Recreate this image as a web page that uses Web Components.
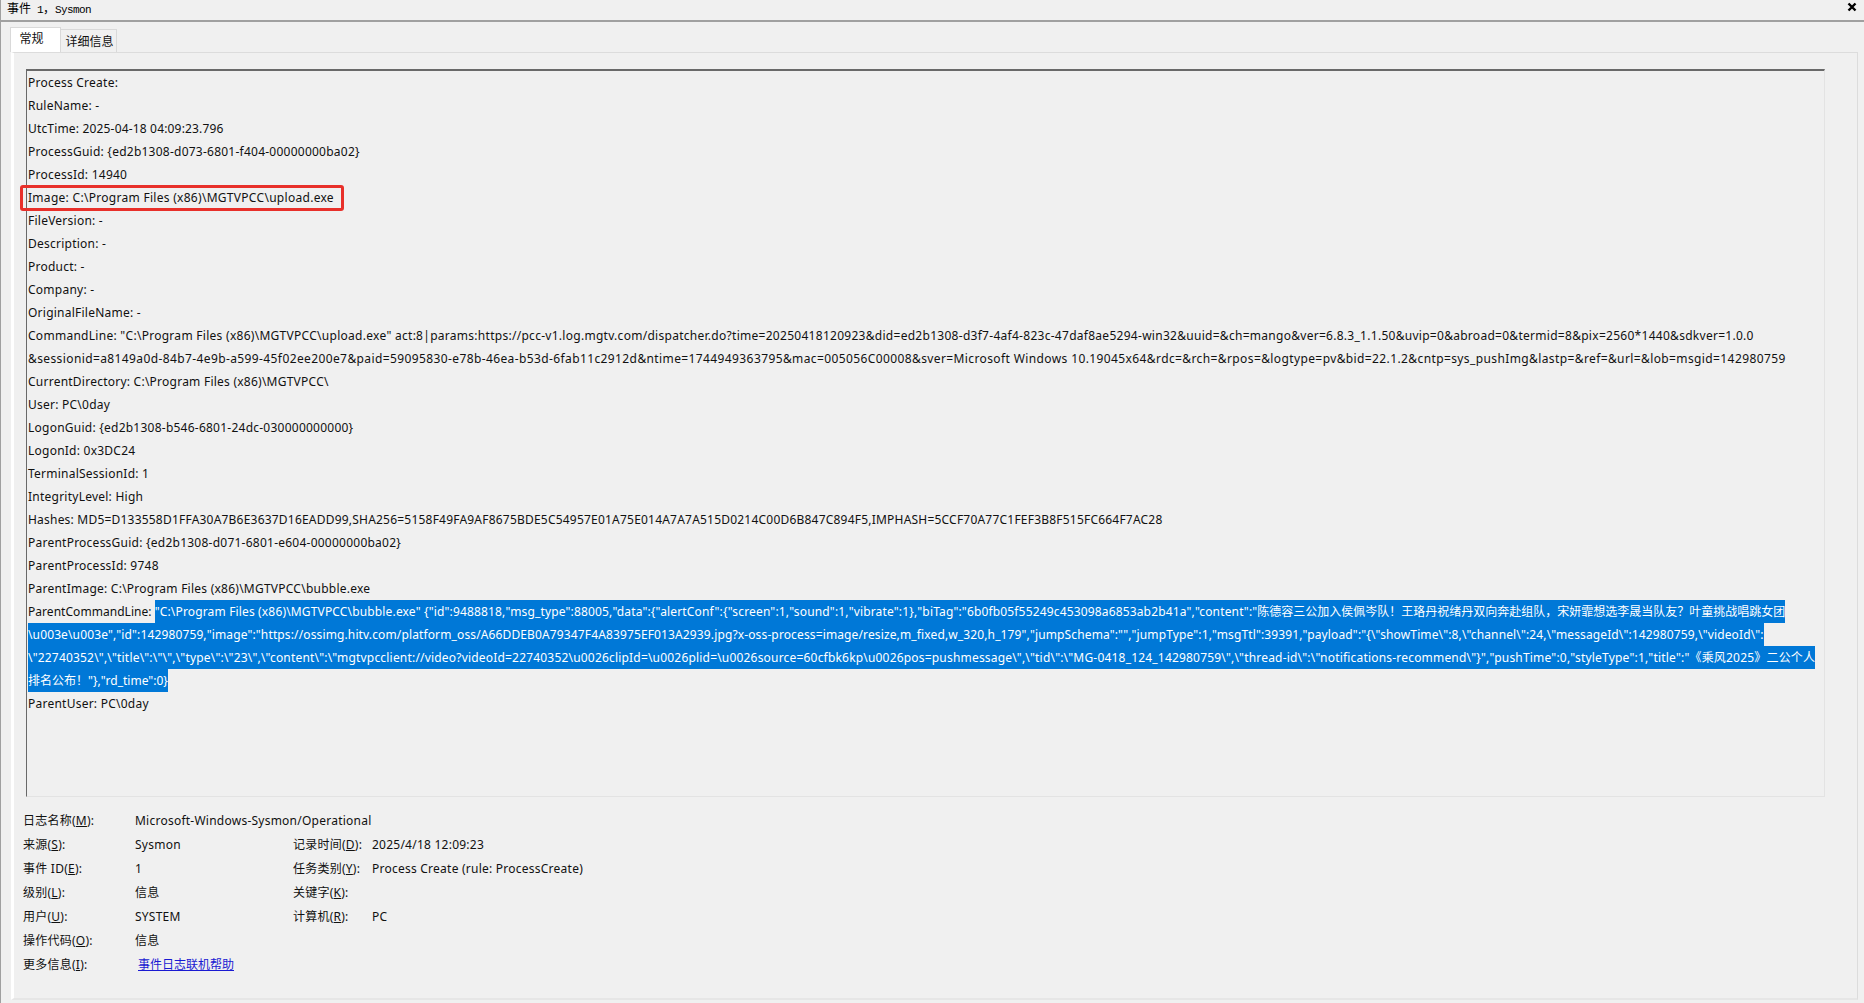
<!DOCTYPE html>
<html lang="zh">
<head>
<meta charset="utf-8">
<title>事件 1，Sysmon</title>
<style>
    html, body { margin: 0; height: 100%; overflow: hidden; background: #f0f0f0; }
    body {
        font-family: "Noto Sans", "Noto Sans CJK SC", sans-serif;
        font-size: 12px;
        color: #111;
    }
    .mono { font: 11px "Liberation Mono", monospace; letter-spacing: -0.6px; white-space: pre; }
    .cjk { letter-spacing: 0; }
    .label { letter-spacing: 0.04px; }
</style>
</head>
<body>
<event-window>
    <title-bar>事件<span class="mono"> 1</span>，<span class="mono">Sysmon</span></title-bar>
    <tab-strip>
        <tab-item active>常规</tab-item>
        <tab-item>详细信息</tab-item>
    </tab-strip>
    <event-panel>
        <message-box slot="message">
            <msg-line>Process Create:</msg-line>
            <msg-line>RuleName: -</msg-line>
            <msg-line style="letter-spacing:0.17px">UtcTime: 2025-04-18 04:09:23.796</msg-line>
            <msg-line>ProcessGuid: {ed2b1308-d073-6801-f404-00000000ba02}</msg-line>
            <msg-line>ProcessId: 14940</msg-line>
            <msg-line boxed style="letter-spacing:0.29px">Image: C:\Program Files (x86)\MGTVPCC\upload.exe</msg-line>
            <msg-line>FileVersion: -</msg-line>
            <msg-line>Description: -</msg-line>
            <msg-line>Product: -</msg-line>
            <msg-line>Company: -</msg-line>
            <msg-line>OriginalFileName: -</msg-line>
            <msg-line style="letter-spacing:0.28px">CommandLine: "C:\Program Files (x86)\MGTVPCC\upload.exe" act:8|params:https://pcc-v1.log.mgtv.com/dispatcher.do?time=20250418120923&amp;did=ed2b1308-d3f7-4af4-823c-47daf8ae5294-win32&amp;uuid=&amp;ch=mango&amp;ver=6.8.3_1.1.50&amp;uvip=0&amp;abroad=0&amp;termid=8&amp;pix=2560*1440&amp;sdkver=1.0.0</msg-line>
            <msg-line style="letter-spacing:0.39px">&amp;sessionid=a8149a0d-84b7-4e9b-a599-45f02ee200e7&amp;paid=59095830-e78b-46ea-b53d-6fab11c2912d&amp;ntime=1744949363795&amp;mac=005056C00008&amp;sver=Microsoft Windows 10.19045x64&amp;rdc=&amp;rch=&amp;rpos=&amp;logtype=pv&amp;bid=22.1.2&amp;cntp=sys_pushImg&amp;lastp=&amp;ref=&amp;url=&amp;lob=msgid=142980759</msg-line>
            <msg-line>CurrentDirectory: C:\Program Files (x86)\MGTVPCC\</msg-line>
            <msg-line>User: PC\0day</msg-line>
            <msg-line>LogonGuid: {ed2b1308-b546-6801-24dc-030000000000}</msg-line>
            <msg-line>LogonId: 0x3DC24</msg-line>
            <msg-line>TerminalSessionId: 1</msg-line>
            <msg-line>IntegrityLevel: High</msg-line>
            <msg-line style="letter-spacing:0.21px">Hashes: MD5=D133558D1FFA30A7B6E3637D16EADD99,SHA256=5158F49FA9AF8675BDE5C54957E01A75E014A7A7A515D0214C00D6B847C894F5,IMPHASH=5CCF70A77C1FEF3B8F515FC664F7AC28</msg-line>
            <msg-line>ParentProcessGuid: {ed2b1308-d071-6801-e604-00000000ba02}</msg-line>
            <msg-line>ParentProcessId: 9748</msg-line>
            <msg-line>ParentImage: C:\Program Files (x86)\MGTVPCC\bubble.exe</msg-line>
            <msg-line><span class="label">ParentCommandLine: </span><sel-text style="letter-spacing:0.155px">"C:\Program Files (x86)\MGTVPCC\bubble.exe" {"id":9488818,"msg_type":88005,"data":{"alertConf":{"screen":1,"sound":1,"vibrate":1},"biTag":"6b0fb05f55249c453098a6853ab2b41a","content":"<span class="cjk">陈德容三公加入侯佩岑队！王珞丹祝绪丹双向奔赴组队，宋妍霏想选李晟当队友？叶童挑战唱跳女团</span></sel-text></msg-line>
            <msg-line style="letter-spacing:0.13px"><sel-text>\u003e\u003e","id":142980759,"image":"https://ossimg.hitv.com/platform_oss/A66DDEB0A79347F4A83975EF013A2939.jpg?x-oss-process=image/resize,m_fixed,w_320,h_179","jumpSchema":"","jumpType":1,"msgTtl":39391,"payload":"{\"showTime\":8,\"channel\":24,\"messageId\":142980759,\"videoId\":</sel-text></msg-line>
            <msg-line style="letter-spacing:0.19px"><sel-text>\"22740352\",\"title\":\"\",\"type\":\"23\",\"content\":\"mgtvpcclient://video?videoId=22740352\u0026clipId=\u0026plid=\u0026source=60cfbk6kp\u0026pos=pushmessage\",\"tid\":\"MG-0418_124_142980759\",\"thread-id\":\"notifications-recommend\"}","pushTime":0,"styleType":1,"title":"《乘风2025》二公个人</sel-text></msg-line>
            <msg-line style="letter-spacing:0"><sel-text>排名公布！"},"rd_time":0}</sel-text></msg-line>
            <msg-line>ParentUser: PC\0day</msg-line>
        </message-box>
        <info-grid slot="info">
            <span>日志名称(<u>M</u>):</span><span class="wide">Microsoft-Windows-Sysmon/Operational</span>
            <span>来源(<u>S</u>):</span><span>Sysmon</span><span>记录时间(<u>D</u>):</span><span>2025/4/18 12:09:23</span>
            <span>事件 ID(<u>E</u>):</span><span>1</span><span>任务类别(<u>Y</u>):</span><span>Process Create (rule: ProcessCreate)</span>
            <span>级别(<u>L</u>):</span><span>信息</span><span>关键字(<u>K</u>):</span><span></span>
            <span>用户(<u>U</u>):</span><span>SYSTEM</span><span>计算机(<u>R</u>):</span><span>PC</span>
            <span>操作代码(<u>O</u>):</span><span class="wide">信息</span>
            <span>更多信息(<u>I</u>):</span><span class="wide"><a-link>事件日志联机帮助</a-link></span>
        </info-grid>
    </event-panel>
</event-window>

<script>
/*
 * BASE
 */
class ShadowEl extends HTMLElement {
    css = ''
    tpl = '<slot></slot>'

    connectedCallback() {
        if (this.shadowRoot) return
        const template = document.createElement('template')
        template.innerHTML = `<style>${this.css}</style>${this.tpl}`
        this.attachShadow({ mode: 'open' })
        this.shadowRoot.appendChild(template.content.cloneNode(true))
    }
}

/*
 * WINDOW
 */
class EventWindow extends ShadowEl {
    css = `
    :host {
        display: flex;
        flex-direction: column;
        box-sizing: border-box;
        height: 1003px;
        border-left: 1px solid #a0a0a0;
        padding-bottom: 3px;
    }`
}
customElements.define('event-window', EventWindow)

class TitleBar extends ShadowEl {
    css = `
    :host {
        display: flex;
        align-items: center;
        flex: none;
        box-sizing: border-box;
        height: 22px;
        padding: 0 0 6px 6px;
        border-bottom: 2px solid #a0a0a0;
        font: 12px "Noto Sans CJK SC", sans-serif;
        color: #000;
    }
    svg { margin-left: auto; margin-right: 7px; flex: none; }`
    tpl = `
    <span><slot></slot></span>
    <svg width="10" height="10" viewBox="0 0 10 10">
        <path d="M1.5 1.5L8.5 8.5M8.5 1.5L1.5 8.5" stroke="#000" stroke-width="2.4" fill="none"/>
    </svg>`
}
customElements.define('title-bar', TitleBar)

/*
 * TABS
 */
class TabStrip extends ShadowEl {
    css = `
    :host {
        display: flex;
        align-items: flex-end;
        flex: none;
        height: 30px;
        padding-left: 9px;
    }`
}
customElements.define('tab-strip', TabStrip)

class TabItem extends ShadowEl {
    css = `
    :host {
        display: flex;
        align-items: center;
        justify-content: center;
        box-sizing: border-box;
        height: 23px;
        width: 56px;
        padding-left: 2px;
        border: 1px solid #d9d9d9;
        border-left: 0;
        border-bottom: 0;
        font-size: 12px;
    }
    :host([active]) {
        height: 25px;
        width: 51px;
        background: #fff;
        border-left: 1px solid #d9d9d9;
        padding: 0 8px 4px 0;
    }`
}
customElements.define('tab-item', TabItem)

/*
 * PANEL
 */
class EventPanel extends ShadowEl {
    css = `
    :host {
        display: flex;
        flex-direction: column;
        flex: 1;
        min-height: 0;
        box-sizing: border-box;
        margin: 0 6px 0 10px;
        border-top: 1px solid #dcdcdc;
        border-right: 1px solid #dcdcdc;
        border-bottom: 2px solid #e6e6e6;
        border-left: 3px solid #fff;
        padding: 16px 32px 0 12px;
    }`
    tpl = `
    <slot name="message"></slot>
    <slot name="info"></slot>`
}
customElements.define('event-panel', EventPanel)

class MessageBox extends ShadowEl {
    css = `
    :host {
        display: block;
        box-sizing: border-box;
        height: 728px;
        flex: none;
        border-top: 2px solid #696969;
        border-left: 1px solid #696969;
        border-right: 1px solid #e3e3e3;
        border-bottom: 1px solid #e3e3e3;
        padding-left: 1px;
    }`
}
customElements.define('message-box', MessageBox)

class MsgLine extends ShadowEl {
    css = `
    :host {
        display: block;
        height: 23px;
        line-height: 23px;
        white-space: nowrap;
        letter-spacing: 0.24px;
    }
    .txt { position: relative; display: inline-block; }
    :host([boxed]) .txt::after {
        content: '';
        position: absolute;
        left: -8px;
        right: -10px;
        top: -1px;
        bottom: -2px;
        border: 3px solid #e8302a;
        border-radius: 3px;
    }`
    tpl = `<span class="txt"><slot></slot></span>`
}
customElements.define('msg-line', MsgLine)

class SelText extends ShadowEl {
    css = `
    :host {
        display: inline-block;
        height: 23px;
        background: #0078d7;
        color: #fff;
    }`
}
customElements.define('sel-text', SelText)

/*
 * INFO GRID
 */
class InfoGrid extends ShadowEl {
    css = `
    :host {
        display: block;
        margin: 11px 0 0 -3px;
        letter-spacing: 0.24px;
    }
    .grid {
        display: grid;
        grid-template-columns: 112px 158px 79px 1fr;
        grid-auto-rows: 24px;
        align-items: center;
        white-space: nowrap;
    }
    ::slotted(.wide) { grid-column: 2 / -1; }`
    tpl = `<div class="grid"><slot></slot></div>`
}
customElements.define('info-grid', InfoGrid)

class ALink extends ShadowEl {
    css = `
    :host {
        display: inline-block;
        margin-left: 3px;
        letter-spacing: 0;
        color: #1a1ad2;
        text-decoration: underline;
    }`
}
customElements.define('a-link', ALink)
</script>
</body>
</html>
